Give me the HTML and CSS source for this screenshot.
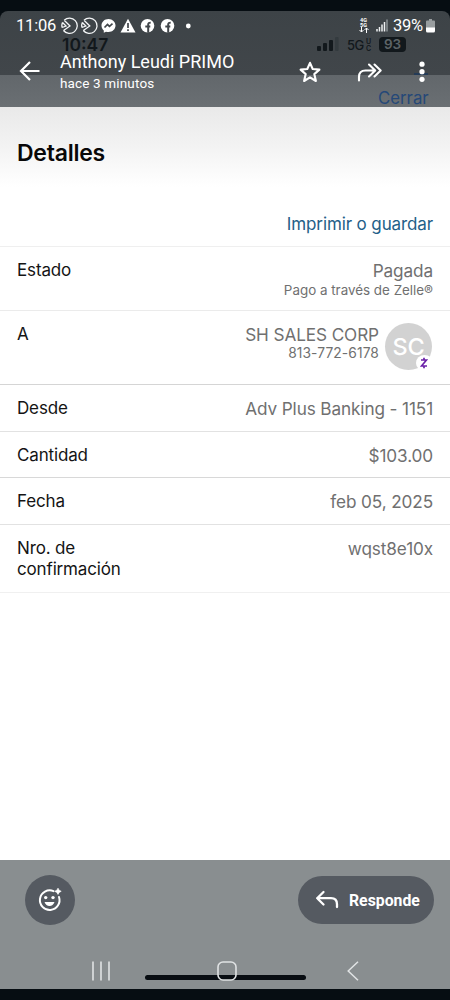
FILE: index.html
```
<!DOCTYPE html>
<html lang="es">
<head>
<meta charset="utf-8">
<title>Detalles</title>
<link rel="stylesheet" href="styles.css">
</head>
<body>
<div class="phone">
  <header class="header">
    <div class="under">
      <span class="under-time">10:47</span>
      <svg class="under-signal" width="24" height="14" viewBox="0 0 24 14"><g fill="#12181c"><rect x="1" y="9" width="4" height="5" rx="1"/><rect x="7" y="6" width="4" height="8" rx="1"/><rect x="13" y="3" width="4" height="11" rx="1"/></g><rect x="19" y="0" width="3.6" height="14" rx="1" fill="#343b3f"/></svg>
      <span class="under-net">5G</span>
      <span class="under-uc"><span>U</span><span>C</span></span>
      <span class="under-battery">93</span>
      <span class="under-close">Cerrar</span>
      <span class="under-mark"></span>
    </div>
    <div class="status">
      <span class="status-time">11:06</span>
      <svg class="status-icons" width="136" height="18" viewBox="0 0 136 18">
        <g fill="none" stroke="#f3f5f6" stroke-width="1.300">
          <path d="M3.200 3.200A7.700 7.700 0 1 1 2.500 13.500M1.100 10.500A7.700 7.700 0 0 1 1.500 5.500M3.200 3.200L9 9l-6.500 4.500M1.500 5.500L5 9l-3.900 1.500"/>
          <path d="M23 3.200A7.700 7.700 0 1 1 22.300 13.500M20.900 10.500A7.700 7.700 0 0 1 21.300 5.500M23 3.200L28.800 9l-6.500 4.500M21.300 5.500L24.800 9l-3.900 1.500"/>
        </g>
        <g fill="#fff">
          <path d="M47.500 2c-4 0-7 2.900-7 6.600 0 2 .9 3.800 2.300 5v2.200l2.200-1.100c.8.3 1.600.4 2.500.4 4 0 7-2.900 7-6.500S51.500 2 47.500 2z"/>
          <path d="M67 1.700L74.500 15.500h-15z"/>
          <circle cx="86.500" cy="8.800" r="6.800"/><circle cx="106.500" cy="8.800" r="6.800"/><circle cx="127.300" cy="9" r="2.400"/>
        </g>
        <path d="M43.500 10.500l3-3 2 1.800 3-2.600" fill="none" stroke="#41464a" stroke-width="1.700"/>
        <path d="M67 6v5M67 12.300v1.700" stroke="#41464a" stroke-width="1.700"/>
        <path d="M87.200 15.800V7.500q0-2 2.500-1.800M84.300 9.500h5M107.200 15.800V7.500q0-2 2.500-1.800M104.300 9.500h5" fill="none" stroke="#41464a" stroke-width="2"/>
      </svg>
      <span class="status-net"><span>4G</span><span>5G</span><svg width="10" height="6" viewBox="0 0 10 6"><path d="M2.500 0v5M.5 3l2 2 2-2M7.500 6V1M5.500 3l2-2 2 2" fill="none" stroke="#fff"/></svg></span>
      <svg class="status-signal" width="12" height="13" viewBox="0 0 12 13"><path d="M1 10v2.500M3.500 8v4.500M6 5.500v7M8.500 3v9.500" stroke="#eef0f1" stroke-width="1.500"/><path d="M11 .5v12" stroke="#8e9497" stroke-width="1.500"/></svg>
      <span class="status-pct">39%</span>
      <svg class="status-battery" width="9" height="14" viewBox="0 0 9 14"><path d="M3 0h3v1.500h2q1 0 1 1V9H0V2.500q0-1 1-1h2z" fill="#989d9f"/><path d="M0 8.500h9V12q0 1.500-1.500 1.500h-6Q0 13.500 0 12z" fill="#fff"/></svg>
    </div>
    <div class="toolbar">
      <svg class="back" width="22" height="20" viewBox="0 0 22 20"><path d="M20.500 10H2M11 1L2 10l9 9" fill="none" stroke="#fff" stroke-width="2.200"/></svg>
      <div class="contact">
        <div class="name">Anthony Leudi PRIMO</div>
        <div class="ago">hace 3 minutos</div>
      </div>
      <svg class="star" width="22" height="22" viewBox="0 0 22 22"><path d="M11 1.800l2.700 6.200 6.700.6-5.100 4.500 1.600 6.900L11 16.400 5.100 20l1.600-6.900-5.100-4.500L8.300 8z" fill="none" stroke="#fff" stroke-width="2.100" stroke-linejoin="round"/></svg>
      <svg class="forward" width="26" height="20" viewBox="0 0 26 20"><path d="M2 17.500v-3.500q0-6.500 6.500-6.500H17M12 1.500l6.200 6L12 13.500M17.500 1.500l6.200 6-6.200 6" fill="none" stroke="#fff" stroke-width="2.100" stroke-linecap="round" stroke-linejoin="round"/></svg>
      <svg class="more" width="6" height="22" viewBox="0 0 6 22" fill="#fff"><circle cx="3" cy="3.200" r="2.600"/><circle cx="3" cy="10.700" r="2.600"/><circle cx="3" cy="18.300" r="2.600"/></svg>
    </div>
  </header>

  <main class="details">
    <div class="heading">
      <h1 class="title">Detalles</h1>
      <a class="print">Imprimir o guardar</a>
    </div>
    <div class="row row-status">
      <span class="label">Estado</span>
      <div class="value"><div class="paid">Pagada</div><div class="via">Pago a través de Zelle®</div></div>
    </div>
    <div class="row row-to">
      <span class="label">A</span>
      <div class="payee">
        <div class="value"><div class="corp">SH SALES CORP</div><div class="tel">813-772-6178</div></div>
        <div class="avatar">SC<span class="badge"><svg width="8" height="12" viewBox="0 0 8 12"><path d="M1 3h5.500L1.500 9H7M4 .8V3M4 9v2.300" fill="none" stroke="#6b21a8" stroke-width="1.700"/></svg></span></div>
      </div>
    </div>
    <div class="row row-from"><span class="label">Desde</span><span class="value">Adv Plus Banking - 1151</span></div>
    <div class="row row-amount"><span class="label">Cantidad</span><span class="value">$103.00</span></div>
    <div class="row row-date"><span class="label">Fecha</span><span class="value">feb 05, 2025</span></div>
    <div class="row row-ref"><span class="label">Nro. de<br>confirmación</span><span class="value">wqst8e10x</span></div>
  </main>

  <footer class="footer">
    <div class="actions">
      <div class="react"><svg width="24" height="24" viewBox="0 0 24 24"><path d="M15.500 3.100A9.800 9.800 0 1 0 21 9" fill="none" stroke="#fff" stroke-width="2" stroke-linecap="round"/><path d="M20 .2l1.100 2 2.100 1.100-2.100 1.100-1.100 2-1.100-2-2.100-1.100 2.100-1.100z" fill="#fff" stroke="#fff" stroke-width=".7"/><circle cx="7.700" cy="9.600" r="1.700" fill="#fff"/><circle cx="15" cy="9.600" r="1.700" fill="#fff"/><path d="M6.500 14h10q-1.500 4-5 4t-5-4z" fill="#fff"/></svg></div>
      <div class="reply"><svg width="24" height="20" viewBox="0 0 24 20"><path d="M8.500 2L2.200 8.200l6.300 6.300M2.200 8.200H16q6 0 6 6V17" fill="none" stroke="#fff" stroke-width="2.300" stroke-linecap="round" stroke-linejoin="round"/></svg><span class="reply-text">Responde</span></div>
    </div>
    <div class="home-line"></div>
    <nav class="nav">
      <svg class="recents" width="20" height="20" viewBox="0 0 20 20"><path d="M2 .5v19M10 .5v19M18 .5v19" stroke="#e0e3e4" stroke-width="1.600"/></svg>
      <svg class="home" width="20" height="20" viewBox="0 0 20 20"><rect x="1" y="1" width="18" height="18" rx="5" fill="none" stroke="#e0e3e4" stroke-width="1.600"/></svg>
      <svg class="prev" width="12" height="20" viewBox="0 0 12 20"><path d="M11 .7L1.200 10 11 19.300" fill="none" stroke="#e0e3e4" stroke-width="1.500"/></svg>
    </nav>
  </footer>
</div>
</body>
</html>
```
FILE: styles.css
```
* { box-sizing: border-box; }
body { margin: 0; background: #060d12; font-family: Inter, "Liberation Sans", sans-serif; }
svg { display: block; flex: none; }
.phone { width: 450px; height: 1000px; padding: 11px 0; display: flex; flex-direction: column; overflow: hidden; background: #060d12; }
.header { position: relative; height: 96px; flex: none; border-radius: 8px 8px 0 0; background: linear-gradient(#3d4347 0, #41464a 64px, #62676b 64px, #6a6f73 96px); font-family: Roboto, sans-serif; color: #fff; }
.status { position: relative; height: 29px; display: flex; align-items: center; padding-left: 16px; font-size: 17px; }
.status-time { width: 44px; font-size: 16.500px; letter-spacing: -.2px; white-space: nowrap; }
.status-icons { margin-left: 1px; }
.status-net { margin-left: 161px; width: 11px; display: flex; flex-direction: column; align-items: center; font-size: 5.500px; line-height: 4.500px; font-weight: 700; }
.status-signal { margin-left: 7px; }
.status-pct { margin-left: 5px; width: 31px; font-size: 16.500px; letter-spacing: -.3px; }
.status-battery { margin-left: 2px; }
.toolbar { position: relative; height: 67px; display: flex; align-items: flex-start; }
.back { margin: 21px 0 0 19px; }
.contact { margin: 11px 0 0 19px; width: 239px; white-space: nowrap; }
.name { font-size: 18px; line-height: 22px; letter-spacing: 0; }
.ago { font-size: 13.500px; line-height: 20px; letter-spacing: .15px; }
.star { margin-top: 21px; }
.forward { margin: 23px 0 0 36px; }
.more { margin: 21px 0 0 36px; }
.under { position: absolute; inset: 0; font-family: Inter, sans-serif; color: #12181c; }
.under > * { position: absolute; }
.under-time { left: 62px; top: 22px; font-size: 17.500px; line-height: 24px; font-weight: 600; }
.under-signal { left: 316px; top: 26px; }
.under-net { left: 347px; top: 25px; font-size: 13px; line-height: 18px; letter-spacing: -.5px; font-weight: 500; }
.under-uc { left: 366px; top: 27px; display: flex; flex-direction: column; font-size: 7px; line-height: 7px; font-weight: 600; }
.under-battery { left: 379px; top: 26px; width: 27px; height: 15px; border-radius: 4px; background: #12181c; color: #5d6467; text-align: center; font-size: 13.500px; line-height: 15px; font-weight: 600; }
.under-close { left: 378px; top: 77px; color: #254878; font-size: 16.800px; line-height: 21px; }
.under-mark { left: 414px; top: 62px; width: 14px; height: 2px; background: #243b57; }
.details { height: 753px; flex: none; background: linear-gradient(#e9e9e9 0, #f3f3f3 40px, #fff 80px); color: #141414; font-size: 17px; line-height: 21px; letter-spacing: -.15px; }
.heading { height: 140px; padding: 33px 17px 0; border-bottom: 1px solid #efefef; display: flex; flex-direction: column; }
.title { margin: 0; font-size: 23px; line-height: 27px; font-weight: 600; letter-spacing: -.25px; color: #080808; }
.print { margin-top: 47px; align-self: flex-end; color: #236088; letter-spacing: -.12px; }
.row { padding: 13px 17px 0; border-bottom: 1px solid #e2e2e2; display: flex; justify-content: space-between; }
.value { color: #707070; text-align: right; white-space: nowrap; font-size: 17.200px; letter-spacing: -.12px; }
.row-status { height: 64px; border-color: #ebebeb; }
.via { font-size: 13.400px; line-height: 18px; letter-spacing: 0; }
.row-to { height: 74px; border-color: #d5d5d5; }
.corp { letter-spacing: -.1px; }
.tel { font-size: 13.800px; line-height: 17px; letter-spacing: .1px; }
.payee { display: flex; gap: 6px; }
.avatar { position: relative; width: 47px; height: 47px; margin: -1px 1px 0 0; border-radius: 50%; background: #d2d2d2; color: #fff; text-align: center; font-size: 23.500px; line-height: 48px; font-weight: 500; }
.badge { position: absolute; right: -1px; bottom: -1px; width: 17px; height: 16px; padding: 2px 4px; border-radius: 50%; background: #fff; }
.row-from { height: 47px; }
.row-amount { height: 46px; border-color: #d8d8d8; }
.row-date { height: 47px; }
.row-ref { height: 68px; border-color: #f0f0f0; }
.footer { position: relative; height: 129px; flex: none; background: #898e90; }
.actions { display: flex; justify-content: space-between; padding: 15px 16px 0 25px; }
.react { width: 50px; height: 50px; border-radius: 50%; background: #555a61; display: flex; align-items: center; justify-content: center; }
.reply { margin-top: 1px; width: 136px; height: 48px; border-radius: 24px; background: #555a61; display: flex; align-items: center; padding-left: 17px; gap: 10px; color: #fff; font-family: Roboto, sans-serif; font-weight: 700; font-size: 15.800px; }
.reply-text { padding-top: 1px; }
.home-line { position: absolute; left: 145px; top: 115px; width: 161px; height: 5px; border-radius: 3px; background: #080d12; }
.nav { position: relative; margin-top: 36px; display: flex; padding-left: 91px; }
.home { margin-left: 106px; }
.prev { margin-left: 110px; }
```
